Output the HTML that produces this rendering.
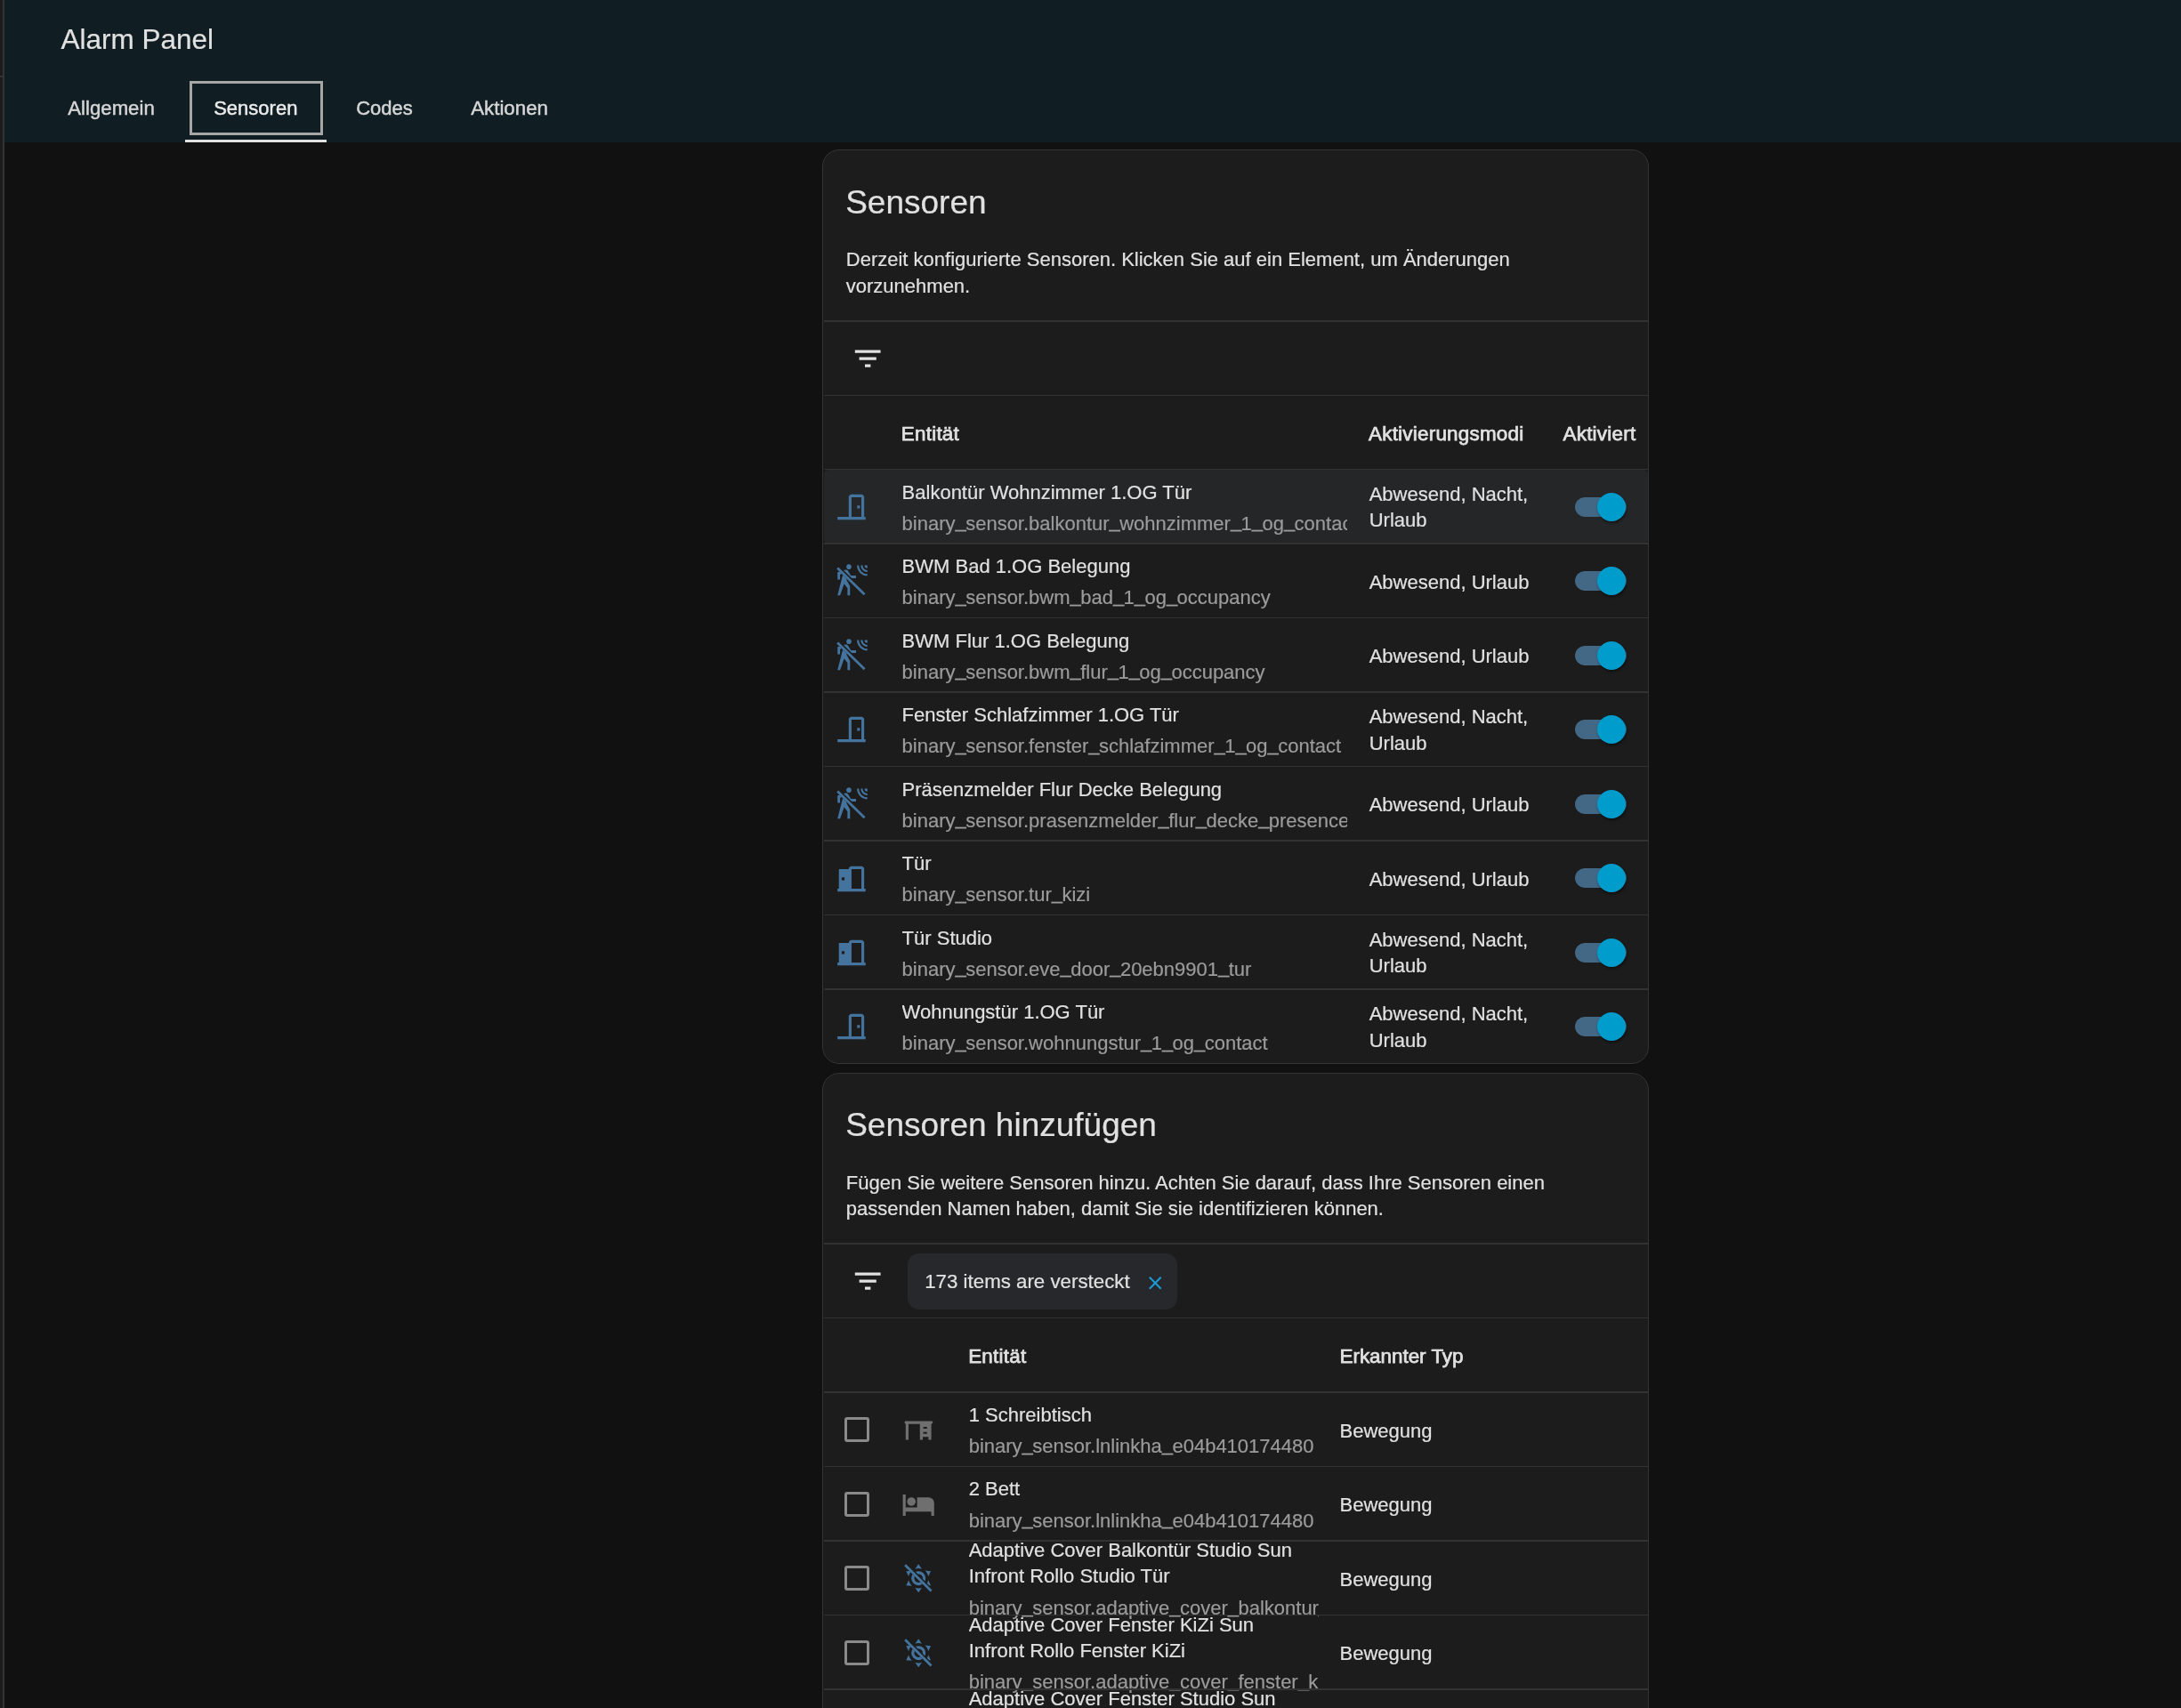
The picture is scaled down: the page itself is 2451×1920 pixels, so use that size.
<!DOCTYPE html>
<html><head><meta charset="utf-8"><title>Alarm Panel</title><style>
*{box-sizing:border-box;margin:0;padding:0}
html,body{width:2451px;height:1920px;overflow:hidden;background:#111111}
#root{position:absolute;left:0;top:0;width:2451px;height:1920px;will-change:transform}
body{position:relative;font-family:"Liberation Sans",sans-serif;color:#e1e1e1}
.a{position:absolute;white-space:nowrap;-webkit-text-stroke:0.2px currentColor}
.sep{position:absolute;height:1.5px;background:#323232}
.card{position:absolute;background:#1c1c1c;border:1.6px solid #343434;border-radius:19px}
.ic{position:absolute;width:38.4px;height:38.4px}
.cb{position:absolute;width:28px;height:28px;border:3px solid #8a8a8a;border-radius:3px}
.clip{position:absolute;overflow:hidden;white-space:nowrap}
</style></head><body><div id="root">
<div class="a" style="left:0;top:0;width:3px;height:1920px;background:#1c1c1c"></div>
<div class="a" style="left:3px;top:0;width:2.3px;height:1920px;background:#333333"></div>
<div class="a" style="left:0;top:85px;width:3px;height:2px;background:#333333"></div>
<div class="a" style="left:5.3px;top:0;width:2446px;height:160px;background:#101e24"></div>
<div class="a" style="left:68.5px;top:23.8px;font-size:31.5px;line-height:40px;color:#e1e1e1;font-weight:400;">Alarm Panel</div>
<div class="a" style="left:76.3px;top:106.6px;font-size:22.2px;line-height:30px;color:#d6d6d6;font-weight:400;-webkit-text-stroke:0.45px currentColor">Allgemein</div>
<div class="a" style="left:240.2px;top:106.7px;font-size:22px;line-height:30px;color:#ececec;font-weight:400;-webkit-text-stroke:0.45px currentColor">Sensoren</div>
<div class="a" style="left:400.2px;top:106.7px;font-size:22px;line-height:30px;color:#d6d6d6;font-weight:400;-webkit-text-stroke:0.45px currentColor">Codes</div>
<div class="a" style="left:529.2px;top:106.6px;font-size:22.3px;line-height:30px;color:#d6d6d6;font-weight:400;-webkit-text-stroke:0.45px currentColor">Aktionen</div>
<div class="a" style="left:213px;top:91.3px;width:149.6px;height:60.8px;border:3.3px solid #a6a6a6"></div>
<div class="a" style="left:208px;top:157px;width:159px;height:3px;background:#e1e1e1"></div>
<div class="card" style="left:924px;top:168px;width:929px;height:1028px"></div>
<div class="a" style="left:950.2px;top:204.0px;font-size:37px;line-height:48px;color:#e1e1e1;font-weight:400;">Sensoren</div>
<div class="a" style="left:950.8px;top:277.2px;font-size:22px;line-height:29.3px;color:#e1e1e1;font-weight:400;">Derzeit konfigurierte Sensoren. Klicken Sie auf ein Element, um Änderungen</div>
<div class="a" style="left:950.8px;top:306.5px;font-size:22px;line-height:29.3px;color:#e1e1e1;font-weight:400;">vorzunehmen.</div>
<div class="sep" style="left:925.5px;top:360.25px;width:926px"></div>
<div class="sep" style="left:925.5px;top:443.55px;width:926px"></div>
<svg class="ic" style="left:956.2px;top:384.0px;width:38.4px;height:38.4px" viewBox="0 0 24 24"><path fill="#e1e1e1" d="M6,13H18V11H6M3,6V8H21V6M10,18H14V16H10Z"/></svg>
<div class="a" style="left:1012.8px;top:473.4px;font-size:22.4px;line-height:29.3px;color:#e1e1e1;font-weight:400;-webkit-text-stroke:0.75px currentColor;letter-spacing:0.25px">Entität</div>
<div class="a" style="left:1538.0px;top:473.4px;font-size:22.4px;line-height:29.3px;color:#e1e1e1;font-weight:400;-webkit-text-stroke:0.75px currentColor;letter-spacing:0.25px">Aktivierungsmodi</div>
<div class="a" style="left:1756.5px;top:473.4px;font-size:22.4px;line-height:29.3px;color:#e1e1e1;font-weight:400;-webkit-text-stroke:0.75px currentColor;letter-spacing:0.25px">Aktiviert</div>
<div class="a" style="left:925.5px;top:527.50px;width:926px;height:83.5px;background:#252628;border-radius:5px"></div>
<div class="sep" style="left:925.5px;top:526.75px;width:926px"></div>
<svg class="ic" style="left:937.7px;top:550.9px;width:37.9px;height:37.9px" viewBox="0 0 24 24"><path fill="#44739e" d="M12,3C10.89,3 10,3.89 10,5V19H2V21H22V19H21V5C21,3.89 20.11,3 19,3H12M12,5H19V19H12V5M16,11H18V13H16V11Z"/></svg>
<div class="clip" style="left:1013.6px;top:515.50px;width:500.8px;height:107.5px">
<div class="a" style="left:0;top:23.0px;font-size:22px;line-height:29.3px;color:#e1e1e1">Balkontür Wohnzimmer 1.OG Tür</div>
<div class="a" style="left:0;top:58.3px;font-size:22px;line-height:29.3px;color:#9b9b9b">binary<span style="position:relative;top:-2.4px;letter-spacing:-0.6px">_</span>sensor.balkontur<span style="position:relative;top:-2.4px;letter-spacing:-0.6px">_</span>wohnzimmer<span style="position:relative;top:-2.4px;letter-spacing:-0.6px">_</span>1<span style="position:relative;top:-2.4px;letter-spacing:-0.6px">_</span>og<span style="position:relative;top:-2.4px;letter-spacing:-0.6px">_</span>contact</div>
</div>
<div class="a" style="left:1538.7px;top:540.7px;font-size:22.0px;line-height:29.3px;color:#e1e1e1;font-weight:400;">Abwesend, Nacht,</div>
<div class="a" style="left:1538.7px;top:570.4px;font-size:22.0px;line-height:29.3px;color:#e1e1e1;font-weight:400;">Urlaub</div>
<div class="a" style="left:1770.0px;top:558.6px;width:57.6px;height:22.4px;border-radius:11.2px;background:#436886"></div>
<div class="a" style="left:1794.9px;top:553.9px;width:32px;height:32px;border-radius:50%;background:#009ccc;box-shadow:1px 2px 3px rgba(0,0,0,0.45)"></div>
<div class="sep" style="left:925.5px;top:610.25px;width:926px"></div>
<svg class="ic" style="left:937.9px;top:634.1px" viewBox="0 0 24 24"><defs><mask id="m1" maskUnits="userSpaceOnUse" x="0" y="0" width="24" height="24"><rect width="24" height="24" fill="#fff"/><line x1="-0.6699999999999999" y1="-0.5300000000000002" x2="24.33" y2="24.07" stroke="#000" stroke-width="2.7"/></mask></defs><path fill="#44739e" mask="url(#m1)" d="M10,0.2C9,0.2 8.2,1 8.2,2C8.2,3 9,3.8 10,3.8C11,3.8 11.8,3 11.8,2C11.8,1 11,0.2 10,0.2M15.67,1A7.33,7.33 0 0,0 23,8.33V7A6,6 0 0,1 17,1H15.67M18.33,1C18.33,3.58 20.42,5.67 23,5.67V4.33C21.16,4.33 19.67,2.84 19.67,1H18.33M21,1A2,2 0 0,0 23,3V1H21M7.92,4.03C7.75,4.03 7.58,4.06 7.42,4.11L2,5.8V11H3.8V7.33L5.91,6.67L2,22H3.8L6.67,13.89L9,17V22H10.8V15.59L8.31,11.05L9.04,8.18L10.12,10H15V8.2H11.38L9.38,4.87C9.08,4.37 8.54,4.03 7.92,4.03Z"/><line x1="2.0" y1="2.8" x2="21.0" y2="21.4" stroke="#44739e" stroke-width="1.75"/></svg>
<div class="clip" style="left:1013.6px;top:599.00px;width:500.8px;height:107.5px">
<div class="a" style="left:0;top:23.0px;font-size:22px;line-height:29.3px;color:#e1e1e1">BWM Bad 1.OG Belegung</div>
<div class="a" style="left:0;top:58.3px;font-size:22px;line-height:29.3px;color:#9b9b9b">binary<span style="position:relative;top:-2.4px;letter-spacing:-0.6px">_</span>sensor.bwm<span style="position:relative;top:-2.4px;letter-spacing:-0.6px">_</span>bad<span style="position:relative;top:-2.4px;letter-spacing:-0.6px">_</span>1<span style="position:relative;top:-2.4px;letter-spacing:-0.6px">_</span>og<span style="position:relative;top:-2.4px;letter-spacing:-0.6px">_</span>occupancy</div>
</div>
<div class="a" style="left:1538.7px;top:639.7px;font-size:22.0px;line-height:29.3px;color:#e1e1e1;font-weight:400;">Abwesend, Urlaub</div>
<div class="a" style="left:1770.0px;top:642.1px;width:57.6px;height:22.4px;border-radius:11.2px;background:#436886"></div>
<div class="a" style="left:1794.9px;top:637.4px;width:32px;height:32px;border-radius:50%;background:#009ccc;box-shadow:1px 2px 3px rgba(0,0,0,0.45)"></div>
<div class="sep" style="left:925.5px;top:693.75px;width:926px"></div>
<svg class="ic" style="left:937.9px;top:717.6px" viewBox="0 0 24 24"><defs><mask id="m2" maskUnits="userSpaceOnUse" x="0" y="0" width="24" height="24"><rect width="24" height="24" fill="#fff"/><line x1="-0.6699999999999999" y1="-0.5300000000000002" x2="24.33" y2="24.07" stroke="#000" stroke-width="2.7"/></mask></defs><path fill="#44739e" mask="url(#m2)" d="M10,0.2C9,0.2 8.2,1 8.2,2C8.2,3 9,3.8 10,3.8C11,3.8 11.8,3 11.8,2C11.8,1 11,0.2 10,0.2M15.67,1A7.33,7.33 0 0,0 23,8.33V7A6,6 0 0,1 17,1H15.67M18.33,1C18.33,3.58 20.42,5.67 23,5.67V4.33C21.16,4.33 19.67,2.84 19.67,1H18.33M21,1A2,2 0 0,0 23,3V1H21M7.92,4.03C7.75,4.03 7.58,4.06 7.42,4.11L2,5.8V11H3.8V7.33L5.91,6.67L2,22H3.8L6.67,13.89L9,17V22H10.8V15.59L8.31,11.05L9.04,8.18L10.12,10H15V8.2H11.38L9.38,4.87C9.08,4.37 8.54,4.03 7.92,4.03Z"/><line x1="2.0" y1="2.8" x2="21.0" y2="21.4" stroke="#44739e" stroke-width="1.75"/></svg>
<div class="clip" style="left:1013.6px;top:682.50px;width:500.8px;height:107.5px">
<div class="a" style="left:0;top:23.0px;font-size:22px;line-height:29.3px;color:#e1e1e1">BWM Flur 1.OG Belegung</div>
<div class="a" style="left:0;top:58.3px;font-size:22px;line-height:29.3px;color:#9b9b9b">binary<span style="position:relative;top:-2.4px;letter-spacing:-0.6px">_</span>sensor.bwm<span style="position:relative;top:-2.4px;letter-spacing:-0.6px">_</span>flur<span style="position:relative;top:-2.4px;letter-spacing:-0.6px">_</span>1<span style="position:relative;top:-2.4px;letter-spacing:-0.6px">_</span>og<span style="position:relative;top:-2.4px;letter-spacing:-0.6px">_</span>occupancy</div>
</div>
<div class="a" style="left:1538.7px;top:723.2px;font-size:22.0px;line-height:29.3px;color:#e1e1e1;font-weight:400;">Abwesend, Urlaub</div>
<div class="a" style="left:1770.0px;top:725.6px;width:57.6px;height:22.4px;border-radius:11.2px;background:#436886"></div>
<div class="a" style="left:1794.9px;top:720.9px;width:32px;height:32px;border-radius:50%;background:#009ccc;box-shadow:1px 2px 3px rgba(0,0,0,0.45)"></div>
<div class="sep" style="left:925.5px;top:777.25px;width:926px"></div>
<svg class="ic" style="left:937.7px;top:801.4px;width:37.9px;height:37.9px" viewBox="0 0 24 24"><path fill="#44739e" d="M12,3C10.89,3 10,3.89 10,5V19H2V21H22V19H21V5C21,3.89 20.11,3 19,3H12M12,5H19V19H12V5M16,11H18V13H16V11Z"/></svg>
<div class="clip" style="left:1013.6px;top:766.00px;width:500.8px;height:107.5px">
<div class="a" style="left:0;top:23.0px;font-size:22px;line-height:29.3px;color:#e1e1e1">Fenster Schlafzimmer 1.OG Tür</div>
<div class="a" style="left:0;top:58.3px;font-size:22px;line-height:29.3px;color:#9b9b9b">binary<span style="position:relative;top:-2.4px;letter-spacing:-0.6px">_</span>sensor.fenster<span style="position:relative;top:-2.4px;letter-spacing:-0.6px">_</span>schlafzimmer<span style="position:relative;top:-2.4px;letter-spacing:-0.6px">_</span>1<span style="position:relative;top:-2.4px;letter-spacing:-0.6px">_</span>og<span style="position:relative;top:-2.4px;letter-spacing:-0.6px">_</span>contact</div>
</div>
<div class="a" style="left:1538.7px;top:791.2px;font-size:22.0px;line-height:29.3px;color:#e1e1e1;font-weight:400;">Abwesend, Nacht,</div>
<div class="a" style="left:1538.7px;top:820.9px;font-size:22.0px;line-height:29.3px;color:#e1e1e1;font-weight:400;">Urlaub</div>
<div class="a" style="left:1770.0px;top:809.1px;width:57.6px;height:22.4px;border-radius:11.2px;background:#436886"></div>
<div class="a" style="left:1794.9px;top:804.4px;width:32px;height:32px;border-radius:50%;background:#009ccc;box-shadow:1px 2px 3px rgba(0,0,0,0.45)"></div>
<div class="sep" style="left:925.5px;top:860.75px;width:926px"></div>
<svg class="ic" style="left:937.9px;top:884.6px" viewBox="0 0 24 24"><defs><mask id="m3" maskUnits="userSpaceOnUse" x="0" y="0" width="24" height="24"><rect width="24" height="24" fill="#fff"/><line x1="-0.6699999999999999" y1="-0.5300000000000002" x2="24.33" y2="24.07" stroke="#000" stroke-width="2.7"/></mask></defs><path fill="#44739e" mask="url(#m3)" d="M10,0.2C9,0.2 8.2,1 8.2,2C8.2,3 9,3.8 10,3.8C11,3.8 11.8,3 11.8,2C11.8,1 11,0.2 10,0.2M15.67,1A7.33,7.33 0 0,0 23,8.33V7A6,6 0 0,1 17,1H15.67M18.33,1C18.33,3.58 20.42,5.67 23,5.67V4.33C21.16,4.33 19.67,2.84 19.67,1H18.33M21,1A2,2 0 0,0 23,3V1H21M7.92,4.03C7.75,4.03 7.58,4.06 7.42,4.11L2,5.8V11H3.8V7.33L5.91,6.67L2,22H3.8L6.67,13.89L9,17V22H10.8V15.59L8.31,11.05L9.04,8.18L10.12,10H15V8.2H11.38L9.38,4.87C9.08,4.37 8.54,4.03 7.92,4.03Z"/><line x1="2.0" y1="2.8" x2="21.0" y2="21.4" stroke="#44739e" stroke-width="1.75"/></svg>
<div class="clip" style="left:1013.6px;top:849.50px;width:500.8px;height:107.5px">
<div class="a" style="left:0;top:23.0px;font-size:22px;line-height:29.3px;color:#e1e1e1">Präsenzmelder Flur Decke Belegung</div>
<div class="a" style="left:0;top:58.3px;font-size:22px;line-height:29.3px;color:#9b9b9b">binary<span style="position:relative;top:-2.4px;letter-spacing:-0.6px">_</span>sensor.prasenzmelder<span style="position:relative;top:-2.4px;letter-spacing:-0.6px">_</span>flur<span style="position:relative;top:-2.4px;letter-spacing:-0.6px">_</span>decke<span style="position:relative;top:-2.4px;letter-spacing:-0.6px">_</span>presence</div>
</div>
<div class="a" style="left:1538.7px;top:890.2px;font-size:22.0px;line-height:29.3px;color:#e1e1e1;font-weight:400;">Abwesend, Urlaub</div>
<div class="a" style="left:1770.0px;top:892.6px;width:57.6px;height:22.4px;border-radius:11.2px;background:#436886"></div>
<div class="a" style="left:1794.9px;top:887.9px;width:32px;height:32px;border-radius:50%;background:#009ccc;box-shadow:1px 2px 3px rgba(0,0,0,0.45)"></div>
<div class="sep" style="left:925.5px;top:944.25px;width:926px"></div>
<svg class="ic" style="left:937.7px;top:968.9px;width:37.9px;height:37.9px" viewBox="0 0 24 24"><path fill="#44739e" d="M12,3C10.89,3 10,3.89 10,5H3V19H2V21H22V19H21V5C21,3.89 20.11,3 19,3H12M12,5H19V19H12V5M5,11H7V13H5V11Z"/></svg>
<div class="clip" style="left:1013.6px;top:933.00px;width:500.8px;height:107.5px">
<div class="a" style="left:0;top:23.0px;font-size:22px;line-height:29.3px;color:#e1e1e1">Tür</div>
<div class="a" style="left:0;top:58.3px;font-size:22px;line-height:29.3px;color:#9b9b9b">binary<span style="position:relative;top:-2.4px;letter-spacing:-0.6px">_</span>sensor.tur<span style="position:relative;top:-2.4px;letter-spacing:-0.6px">_</span>kizi</div>
</div>
<div class="a" style="left:1538.7px;top:973.7px;font-size:22.0px;line-height:29.3px;color:#e1e1e1;font-weight:400;">Abwesend, Urlaub</div>
<div class="a" style="left:1770.0px;top:976.1px;width:57.6px;height:22.4px;border-radius:11.2px;background:#436886"></div>
<div class="a" style="left:1794.9px;top:971.4px;width:32px;height:32px;border-radius:50%;background:#009ccc;box-shadow:1px 2px 3px rgba(0,0,0,0.45)"></div>
<div class="sep" style="left:925.5px;top:1027.75px;width:926px"></div>
<svg class="ic" style="left:937.7px;top:1052.4px;width:37.9px;height:37.9px" viewBox="0 0 24 24"><path fill="#44739e" d="M12,3C10.89,3 10,3.89 10,5H3V19H2V21H22V19H21V5C21,3.89 20.11,3 19,3H12M12,5H19V19H12V5M5,11H7V13H5V11Z"/></svg>
<div class="clip" style="left:1013.6px;top:1016.50px;width:500.8px;height:107.5px">
<div class="a" style="left:0;top:23.0px;font-size:22px;line-height:29.3px;color:#e1e1e1">Tür Studio</div>
<div class="a" style="left:0;top:58.3px;font-size:22px;line-height:29.3px;color:#9b9b9b">binary<span style="position:relative;top:-2.4px;letter-spacing:-0.6px">_</span>sensor.eve<span style="position:relative;top:-2.4px;letter-spacing:-0.6px">_</span>door<span style="position:relative;top:-2.4px;letter-spacing:-0.6px">_</span>20ebn9901<span style="position:relative;top:-2.4px;letter-spacing:-0.6px">_</span>tur</div>
</div>
<div class="a" style="left:1538.7px;top:1041.7px;font-size:22.0px;line-height:29.3px;color:#e1e1e1;font-weight:400;">Abwesend, Nacht,</div>
<div class="a" style="left:1538.7px;top:1071.4px;font-size:22.0px;line-height:29.3px;color:#e1e1e1;font-weight:400;">Urlaub</div>
<div class="a" style="left:1770.0px;top:1059.6px;width:57.6px;height:22.4px;border-radius:11.2px;background:#436886"></div>
<div class="a" style="left:1794.9px;top:1054.8px;width:32px;height:32px;border-radius:50%;background:#009ccc;box-shadow:1px 2px 3px rgba(0,0,0,0.45)"></div>
<div class="sep" style="left:925.5px;top:1111.25px;width:926px"></div>
<svg class="ic" style="left:937.7px;top:1135.4px;width:37.9px;height:37.9px" viewBox="0 0 24 24"><path fill="#44739e" d="M12,3C10.89,3 10,3.89 10,5V19H2V21H22V19H21V5C21,3.89 20.11,3 19,3H12M12,5H19V19H12V5M16,11H18V13H16V11Z"/></svg>
<div class="clip" style="left:1013.6px;top:1100.00px;width:500.8px;height:107.5px">
<div class="a" style="left:0;top:23.0px;font-size:22px;line-height:29.3px;color:#e1e1e1">Wohnungstür 1.OG Tür</div>
<div class="a" style="left:0;top:58.3px;font-size:22px;line-height:29.3px;color:#9b9b9b">binary<span style="position:relative;top:-2.4px;letter-spacing:-0.6px">_</span>sensor.wohnungstur<span style="position:relative;top:-2.4px;letter-spacing:-0.6px">_</span>1<span style="position:relative;top:-2.4px;letter-spacing:-0.6px">_</span>og<span style="position:relative;top:-2.4px;letter-spacing:-0.6px">_</span>contact</div>
</div>
<div class="a" style="left:1538.7px;top:1125.2px;font-size:22.0px;line-height:29.3px;color:#e1e1e1;font-weight:400;">Abwesend, Nacht,</div>
<div class="a" style="left:1538.7px;top:1154.9px;font-size:22.0px;line-height:29.3px;color:#e1e1e1;font-weight:400;">Urlaub</div>
<div class="a" style="left:1770.0px;top:1143.1px;width:57.6px;height:22.4px;border-radius:11.2px;background:#436886"></div>
<div class="a" style="left:1794.9px;top:1138.3px;width:32px;height:32px;border-radius:50%;background:#009ccc;box-shadow:1px 2px 3px rgba(0,0,0,0.45)"></div>
<div class="card" style="left:924px;top:1205.9px;width:929px;height:800px"></div>
<div class="a" style="left:950.2px;top:1240.8px;font-size:37px;line-height:48px;color:#e1e1e1;font-weight:400;">Sensoren hinzufügen</div>
<div class="a" style="left:950.8px;top:1314.7px;font-size:22px;line-height:29.3px;color:#e1e1e1;font-weight:400;">Fügen Sie weitere Sensoren hinzu. Achten Sie darauf, dass Ihre Sensoren einen</div>
<div class="a" style="left:950.8px;top:1344.0px;font-size:22px;line-height:29.3px;color:#e1e1e1;font-weight:400;">passenden Namen haben, damit Sie sie identifizieren können.</div>
<div class="sep" style="left:925.5px;top:1397.25px;width:926px"></div>
<div class="sep" style="left:925.5px;top:1480.75px;width:926px"></div>
<svg class="ic" style="left:956.2px;top:1421.0px;width:38.4px;height:38.4px" viewBox="0 0 24 24"><path fill="#e1e1e1" d="M6,13H18V11H6M3,6V8H21V6M10,18H14V16H10Z"/></svg>
<div class="a" style="left:1019.7px;top:1408.7px;width:303.3px;height:63px;border-radius:12.8px;background:#26282b"></div>
<div class="a" style="left:1039.2px;top:1426.3px;font-size:22.3px;line-height:29.3px;color:#e1e1e1;font-weight:400;">173 items are versteckt</div>
<svg class="ic" style="left:1285.6px;top:1429.9px;width:24.5px;height:24.5px" viewBox="0 0 24 24"><path fill="#1c9bd6" d="M19,6.41L17.59,5L12,10.59L6.41,5L5,6.41L10.59,12L5,17.59L6.41,19L12,13.41L17.59,19L19,17.59L13.41,12L19,6.41Z"/></svg>
<div class="a" style="left:1088.2px;top:1510.1px;font-size:22.4px;line-height:29.3px;color:#e1e1e1;font-weight:400;-webkit-text-stroke:0.75px currentColor;letter-spacing:0.25px">Entität</div>
<div class="a" style="left:1505.5px;top:1510.1px;font-size:22.4px;line-height:29.3px;color:#e1e1e1;font-weight:400;-webkit-text-stroke:0.75px currentColor;letter-spacing:0.25px;letter-spacing:0px">Erkannter Typ</div>
<div class="sep" style="left:925.5px;top:1564.45px;width:926px"></div>
<div class="cb" style="left:949px;top:1593.0px"></div>
<svg class="ic" style="left:1013.4px;top:1588.4px" viewBox="0 0 24 24"><path fill="#6f6f6f" fill-rule="evenodd" d="M2.6,6H21.6L22.1,7.1L21.3,8H2.9L2.1,7.1Z M3,8H5V19H3Z M13,8H21V19H19V17H15V19H13Z M15.4,10H18V11.2H15.4Z M15.4,13.6H18V14.8H15.4Z"/></svg>
<div class="clip" style="left:1088.7px;top:1553.20px;width:393.0px;height:107.5px">
<div class="a" style="left:0;top:22.6px;font-size:22px;line-height:29.3px;color:#e1e1e1">1 Schreibtisch</div>
<div class="a" style="left:0;top:58.1px;font-size:22px;line-height:29.3px;color:#9b9b9b">binary<span style="position:relative;top:-2.4px;letter-spacing:-0.6px">_</span>sensor.lnlinkha<span style="position:relative;top:-2.4px;letter-spacing:-0.6px">_</span>e04b410174480</div>
</div>
<div class="a" style="left:1505.5px;top:1593.9px;font-size:22.0px;line-height:29.3px;color:#e1e1e1;font-weight:400;">Bewegung</div>
<div class="sep" style="left:925.5px;top:1647.95px;width:926px"></div>
<div class="cb" style="left:949px;top:1676.5px"></div>
<svg class="ic" style="left:1013.4px;top:1671.9px;width:38.4px;height:38.4px" viewBox="0 0 24 24"><path fill="#6f6f6f" d="M19,7H11V14H3V5H1V20H3V17H21V20H23V11A4,4 0 0,0 19,7M7,13A3,3 0 0,0 10,10A3,3 0 0,0 7,7A3,3 0 0,0 4,10A3,3 0 0,0 7,13Z"/></svg>
<div class="clip" style="left:1088.7px;top:1636.70px;width:393.0px;height:107.5px">
<div class="a" style="left:0;top:22.6px;font-size:22px;line-height:29.3px;color:#e1e1e1">2 Bett</div>
<div class="a" style="left:0;top:58.1px;font-size:22px;line-height:29.3px;color:#9b9b9b">binary<span style="position:relative;top:-2.4px;letter-spacing:-0.6px">_</span>sensor.lnlinkha<span style="position:relative;top:-2.4px;letter-spacing:-0.6px">_</span>e04b410174480</div>
</div>
<div class="a" style="left:1505.5px;top:1677.4px;font-size:22.0px;line-height:29.3px;color:#e1e1e1;font-weight:400;">Bewegung</div>
<div class="sep" style="left:925.5px;top:1731.45px;width:926px"></div>
<div class="cb" style="left:949px;top:1760.0px"></div>
<svg class="ic" style="left:1013.4px;top:1755.4px" viewBox="0 0 24 24"><defs><mask id="m4" maskUnits="userSpaceOnUse" x="0" y="0" width="24" height="24"><rect width="24" height="24" fill="#fff"/><line x1="-0.06999999999999984" y1="-0.73" x2="24.33" y2="23.67" stroke="#000" stroke-width="2.7"/></mask></defs><path fill="#44739e" mask="url(#m4)" d="M12,7A5,5 0 0,1 17,12A5,5 0 0,1 12,17A5,5 0 0,1 7,12A5,5 0 0,1 12,7M12,9A3,3 0 0,0 9,12A3,3 0 0,0 12,15A3,3 0 0,0 15,12A3,3 0 0,0 12,9M12,2L14.39,5.42C13.65,5.15 12.84,5 12,5C11.16,5 10.35,5.15 9.61,5.42L12,2M3.34,7L7.5,6.65C6.9,7.16 6.36,7.78 5.94,8.5C5.5,9.24 5.25,10 5.11,10.79L3.34,7M3.36,17L5.12,13.23C5.26,14 5.530,14.78 5.95,15.5C6.37,16.24 6.91,16.86 7.5,17.37L3.36,17M20.65,7L18.88,10.79C18.74,10 18.47,9.23 18.05,8.5C17.63,7.78 17.1,7.15 16.5,6.64L20.65,7M20.64,17L16.5,17.36C17.09,16.85 17.62,16.22 18.04,15.5C18.460,14.77 18.73,14 18.87,13.21L20.64,17M12,22L9.59,18.56C10.33,18.83 11.14,19 12,19C12.82,19 13.63,18.83 14.37,18.56L12,22Z"/><line x1="2.6" y1="2.6" x2="21.0" y2="21.0" stroke="#44739e" stroke-width="1.75"/></svg>
<div class="clip" style="left:1088.7px;top:1720.20px;width:393.0px;height:107.5px">
<div class="a" style="left:0;top:8.0px;font-size:22px;line-height:29.3px;color:#e1e1e1">Adaptive Cover Balkontür Studio Sun</div>
<div class="a" style="left:0;top:37.3px;font-size:22px;line-height:29.3px;color:#e1e1e1">Infront Rollo Studio Tür</div>
<div class="a" style="left:0;top:72.8px;font-size:22px;line-height:29.3px;color:#9b9b9b">binary<span style="position:relative;top:-2.4px;letter-spacing:-0.6px">_</span>sensor.adaptive<span style="position:relative;top:-2.4px;letter-spacing:-0.6px">_</span>cover<span style="position:relative;top:-2.4px;letter-spacing:-0.6px">_</span>balkontur<span style="position:relative;top:-2.4px;letter-spacing:-0.6px">_</span>studio</div>
</div>
<div class="a" style="left:1505.5px;top:1760.9px;font-size:22.0px;line-height:29.3px;color:#e1e1e1;font-weight:400;">Bewegung</div>
<div class="sep" style="left:925.5px;top:1814.95px;width:926px"></div>
<div class="cb" style="left:949px;top:1843.5px"></div>
<svg class="ic" style="left:1013.4px;top:1838.9px" viewBox="0 0 24 24"><defs><mask id="m5" maskUnits="userSpaceOnUse" x="0" y="0" width="24" height="24"><rect width="24" height="24" fill="#fff"/><line x1="-0.06999999999999984" y1="-0.73" x2="24.33" y2="23.67" stroke="#000" stroke-width="2.7"/></mask></defs><path fill="#44739e" mask="url(#m5)" d="M12,7A5,5 0 0,1 17,12A5,5 0 0,1 12,17A5,5 0 0,1 7,12A5,5 0 0,1 12,7M12,9A3,3 0 0,0 9,12A3,3 0 0,0 12,15A3,3 0 0,0 15,12A3,3 0 0,0 12,9M12,2L14.39,5.42C13.65,5.15 12.84,5 12,5C11.16,5 10.35,5.15 9.61,5.42L12,2M3.34,7L7.5,6.65C6.9,7.16 6.36,7.78 5.94,8.5C5.5,9.24 5.25,10 5.11,10.79L3.34,7M3.36,17L5.12,13.23C5.26,14 5.530,14.78 5.95,15.5C6.37,16.24 6.91,16.86 7.5,17.37L3.36,17M20.65,7L18.88,10.79C18.74,10 18.47,9.23 18.05,8.5C17.63,7.78 17.1,7.15 16.5,6.64L20.65,7M20.64,17L16.5,17.36C17.09,16.85 17.62,16.22 18.04,15.5C18.460,14.77 18.73,14 18.87,13.21L20.64,17M12,22L9.59,18.56C10.33,18.83 11.14,19 12,19C12.82,19 13.63,18.83 14.37,18.56L12,22Z"/><line x1="2.6" y1="2.6" x2="21.0" y2="21.0" stroke="#44739e" stroke-width="1.75"/></svg>
<div class="clip" style="left:1088.7px;top:1803.70px;width:393.0px;height:107.5px">
<div class="a" style="left:0;top:8.0px;font-size:22px;line-height:29.3px;color:#e1e1e1">Adaptive Cover Fenster KiZi Sun</div>
<div class="a" style="left:0;top:37.3px;font-size:22px;line-height:29.3px;color:#e1e1e1">Infront Rollo Fenster KiZi</div>
<div class="a" style="left:0;top:72.8px;font-size:22px;line-height:29.3px;color:#9b9b9b">binary<span style="position:relative;top:-2.4px;letter-spacing:-0.6px">_</span>sensor.adaptive<span style="position:relative;top:-2.4px;letter-spacing:-0.6px">_</span>cover<span style="position:relative;top:-2.4px;letter-spacing:-0.6px">_</span>fenster<span style="position:relative;top:-2.4px;letter-spacing:-0.6px">_</span>kizi</div>
</div>
<div class="a" style="left:1505.5px;top:1844.4px;font-size:22.0px;line-height:29.3px;color:#e1e1e1;font-weight:400;">Bewegung</div>
<div class="sep" style="left:925.5px;top:1898.45px;width:926px"></div>
<div class="cb" style="left:949px;top:1927.0px"></div>
<svg class="ic" style="left:1013.4px;top:1922.4px" viewBox="0 0 24 24"><defs><mask id="m6" maskUnits="userSpaceOnUse" x="0" y="0" width="24" height="24"><rect width="24" height="24" fill="#fff"/><line x1="-0.06999999999999984" y1="-0.73" x2="24.33" y2="23.67" stroke="#000" stroke-width="2.7"/></mask></defs><path fill="#44739e" mask="url(#m6)" d="M12,7A5,5 0 0,1 17,12A5,5 0 0,1 12,17A5,5 0 0,1 7,12A5,5 0 0,1 12,7M12,9A3,3 0 0,0 9,12A3,3 0 0,0 12,15A3,3 0 0,0 15,12A3,3 0 0,0 12,9M12,2L14.39,5.42C13.65,5.15 12.84,5 12,5C11.16,5 10.35,5.15 9.61,5.42L12,2M3.34,7L7.5,6.65C6.9,7.16 6.36,7.78 5.94,8.5C5.5,9.24 5.25,10 5.11,10.79L3.34,7M3.36,17L5.12,13.23C5.26,14 5.530,14.78 5.95,15.5C6.37,16.24 6.91,16.86 7.5,17.37L3.36,17M20.65,7L18.88,10.79C18.74,10 18.47,9.23 18.05,8.5C17.63,7.78 17.1,7.15 16.5,6.64L20.65,7M20.64,17L16.5,17.36C17.09,16.85 17.62,16.22 18.04,15.5C18.460,14.77 18.73,14 18.87,13.21L20.64,17M12,22L9.59,18.56C10.33,18.83 11.14,19 12,19C12.82,19 13.63,18.83 14.37,18.56L12,22Z"/><line x1="2.6" y1="2.6" x2="21.0" y2="21.0" stroke="#44739e" stroke-width="1.75"/></svg>
<div class="clip" style="left:1088.7px;top:1887.20px;width:393.0px;height:107.5px">
<div class="a" style="left:0;top:8.0px;font-size:22px;line-height:29.3px;color:#e1e1e1">Adaptive Cover Fenster Studio Sun</div>
<div class="a" style="left:0;top:37.3px;font-size:22px;line-height:29.3px;color:#e1e1e1">Infront Rollo Fenster Studio</div>
<div class="a" style="left:0;top:72.8px;font-size:22px;line-height:29.3px;color:#9b9b9b">binary<span style="position:relative;top:-2.4px;letter-spacing:-0.6px">_</span>sensor.adaptive<span style="position:relative;top:-2.4px;letter-spacing:-0.6px">_</span>cover<span style="position:relative;top:-2.4px;letter-spacing:-0.6px">_</span>fenster<span style="position:relative;top:-2.4px;letter-spacing:-0.6px">_</span>studio</div>
</div>
<div class="a" style="left:1505.5px;top:1927.9px;font-size:22.0px;line-height:29.3px;color:#e1e1e1;font-weight:400;">Bewegung</div>
</div></body></html>
